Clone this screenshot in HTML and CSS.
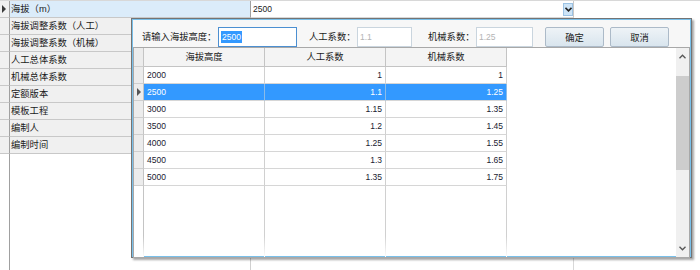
FILE: index.html
```html
<!DOCTYPE html>
<html lang="zh-CN">
<head>
    <meta charset="UTF-8">
    <title>海拔系数</title>
    <link rel="stylesheet" href="styles.css">
</head>
<body>

<div class="sheet">
    <div class="row current">
        <div class="rh"><span class="mark"></span></div>
        <div class="name">海拔（m）</div>
        <div class="val">2500
            <span class="drop">
                <svg width="7" height="5" viewBox="0 0 7 5"><polyline points="0.5,0.8 3.5,3.8 6.5,0.8" fill="none" stroke="#222" stroke-width="1.6"/></svg>
            </span>
        </div>
        <div class="rest"></div>
    </div>
    <div class="row"><div class="rh"></div><div class="name">海拔调整系数（人工）</div><div class="val"></div><div class="rest"></div></div>
    <div class="row"><div class="rh"></div><div class="name">海拔调整系数（机械）</div><div class="val"></div><div class="rest"></div></div>
    <div class="row"><div class="rh"></div><div class="name">人工总体系数</div><div class="val"></div><div class="rest"></div></div>
    <div class="row"><div class="rh"></div><div class="name">机械总体系数</div><div class="val"></div><div class="rest"></div></div>
    <div class="row"><div class="rh"></div><div class="name">定额版本</div><div class="val"></div><div class="rest"></div></div>
    <div class="row"><div class="rh"></div><div class="name">模板工程</div><div class="val"></div><div class="rest"></div></div>
    <div class="row"><div class="rh"></div><div class="name">编制人</div><div class="val"></div><div class="rest"></div></div>
    <div class="row"><div class="rh"></div><div class="name">编制时间</div><div class="val"></div><div class="rest"></div></div>
    <div class="row filler"><div class="rh"></div><div class="name"></div><div class="val"></div><div class="rest"></div></div>
</div>

<!-- dropdown editor for 海拔 -->
<div class="popup">
    <div class="toolbar">
        <label class="lbl">请输入海拔高度：</label>
        <div class="box focus box-alt"><span class="sel">2500</span></div>
        <label class="lbl lbl-2">人工系数：</label>
        <div class="box off box-rg">1.1</div>
        <label class="lbl lbl-3">机械系数：</label>
        <div class="box off box-jx">1.25</div>
        <button class="btn btn-ok">确定</button>
        <button class="btn">取消</button>
    </div>

    <div class="grid">
        <div class="cols">
            <div class="grow head">
                <div class="gh"></div>
                <div class="gc center">海拔高度</div>
                <div class="gc center">人工系数</div>
                <div class="gc center">机械系数</div>
            </div>
            <div class="grow"><div class="gh"></div><div class="gc">2000</div><div class="gc num">1</div><div class="gc num">1</div></div>
            <div class="grow picked"><div class="gh"><span class="mark"></span></div><div class="gc">2500</div><div class="gc num">1.1</div><div class="gc num">1.25</div></div>
            <div class="grow"><div class="gh"></div><div class="gc">3000</div><div class="gc num">1.15</div><div class="gc num">1.35</div></div>
            <div class="grow"><div class="gh"></div><div class="gc">3500</div><div class="gc num">1.2</div><div class="gc num">1.45</div></div>
            <div class="grow"><div class="gh"></div><div class="gc">4000</div><div class="gc num">1.25</div><div class="gc num">1.55</div></div>
            <div class="grow"><div class="gh"></div><div class="gc">4500</div><div class="gc num">1.3</div><div class="gc num">1.65</div></div>
            <div class="grow"><div class="gh"></div><div class="gc">5000</div><div class="gc num">1.35</div><div class="gc num">1.75</div></div>
            <div class="grow empty"><div class="gh"></div><div class="gc"></div><div class="gc"></div><div class="gc"></div></div>
        </div>
        <div class="vscroll">
            <span class="arr">
                <svg width="7" height="5" viewBox="0 0 7 5"><polyline points="0.5,4.2 3.5,1.2 6.5,4.2" fill="none" stroke="#555" stroke-width="1.3"/></svg>
            </span>
            <div class="track"><div class="thumb"></div></div>
            <span class="arr">
                <svg width="7" height="5" viewBox="0 0 7 5"><polyline points="0.5,0.8 3.5,3.8 6.5,0.8" fill="none" stroke="#555" stroke-width="1.3"/></svg>
            </span>
        </div>
    </div>
</div>

</body>
</html>
```

FILE: styles.css
```css
* {
    box-sizing: border-box;
}
body {
    margin: 0;
    background: #fff;
    font-family: "Liberation Sans", "Noto Sans CJK SC", sans-serif;
    font-size: 9.3px;
    color: #1b1b1b;
}

/* property sheet behind the dropdown */
.sheet {
    height: 270px;
    display: flex;
    flex-direction: column;
    border-top: 1px solid #d8d8d8;
}
.row {
    display: flex;
    height: 17px;
    line-height: 16px;
}
.row .rh {
    width: 10px;
    background: #f0f0f0;
    border-right: 1px solid #a0a0a0;
    border-bottom: 1px solid #c8c8c8;
    position: relative;
}
.row .name {
    width: 241px;
    padding-left: 1px;
    background: #f0f0f0;
    border-right: 1px solid #a0a0a0;
    border-bottom: 1px solid #c8c8c8;
    white-space: nowrap;
}
.row .val {
    width: 323px;
    border-right: 1px solid #c8c8c8;
    border-bottom: 1px solid #d8d8d8;
    padding-left: 2px;
    font-size: 8.5px;
    position: relative;
}
.row .rest {
    flex: 1;
}
.row.current .name {
    background: #dbecfa;
}
.row.filler {
    flex: 1;
}
.row.filler .rh,
.row.filler .name,
.row.filler .val {
    background: #fff;
    border-bottom: none;
}
.row.filler .name {
    border-right-color: #d0d0d0;
}
.row.filler .val {
    border-right-color: #d8d8d8;
}

.mark {
    position: absolute;
    left: 2px;
    top: 4px;
    border-left: 4px solid #3a3a3a;
    border-top: 4px solid transparent;
    border-bottom: 4px solid transparent;
}
.drop {
    position: absolute;
    right: 0;
    top: 2px;
    width: 10px;
    height: 13px;
    background: #cde4f7;
    border: 1px solid #9cc3e5;
    display: flex;
    align-items: center;
    justify-content: center;
}

/* dropdown popup */
.popup {
    position: absolute;
    left: 131px;
    top: 18px;
    width: 561px;
    height: 240px;
    background: #fff;
    border: 1px solid #747474;
    box-shadow: inset 0 0 0 1px #79c0ea, 2px 2px 2px rgba(0, 0, 0, 0.35);
    padding: 1px 1px 2px 1px;
    display: flex;
    flex-direction: column;
}
.toolbar {
    height: 30px;
    background: #f7f7f7;
    display: flex;
    align-items: flex-start;
    padding: 7px 0 0 9px;
}
.lbl {
    line-height: 20px;
    white-space: nowrap;
    width: 76px;
}
.lbl-2 {
    margin-left: 12px;
    width: 48px;
}
.lbl-3 {
    margin-left: 16px;
    width: 48px;
}
.box {
    height: 20px;
    line-height: 18px;
    background: #fff;
    border: 1px solid #cad5de;
    font-size: 8.5px;
    padding-left: 2px;
    color: #b4b4b4;
}
.box.focus {
    border-color: #4c8fd1;
    color: #fff;
}
.box-alt {
    width: 79px;
}
.box-rg {
    width: 55px;
}
.box-jx {
    width: 57px;
}
.sel {
    background: #3399ff;
    padding: 1px 1px;
}
.btn {
    width: 59px;
    height: 20px;
    margin-left: 6px;
    font-family: inherit;
    font-size: 9.3px;
    color: #1b1b1b;
    border: 1px solid #acbac8;
    border-radius: 2px;
    background: linear-gradient(#eef3f7, #d9e5ee);
    padding: 0;
}
.btn-ok {
    margin-left: 12px;
}

.grid {
    flex: 1;
    display: flex;
    border: 1px solid #a8a8a8;
}
.cols {
    flex: 1;
    display: flex;
    flex-direction: column;
}
.grow {
    display: flex;
    height: 17px;
    line-height: 16px;
    font-size: 8.5px;
    color: #1a1a30;
}
.grow.head {
    height: 19px;
    line-height: 18px;
    font-size: 9.3px;
    color: #1b1b1b;
}
.grow .gh {
    width: 10px;
    background: #ececec;
    border-right: 1px solid #c4c4c4;
    border-bottom: 1px solid #cfcfcf;
    position: relative;
}
.grow .gc {
    width: 121px;
    padding: 0 3px;
    border-right: 1px solid #d0d0d0;
    border-bottom: 1px solid #d6d6d6;
    white-space: nowrap;
}
.grow.head .gc {
    background: #f4f4f4;
    border-right-color: #c4c4c4;
    border-bottom-color: #c4c4c4;
}
.grow .center {
    text-align: center;
}
.grow .num {
    text-align: right;
}
.grow.picked .gc {
    background: #3399ff;
    color: #fff;
    border-right-color: #8bbbe8;
}
.grow.picked .gh .mark {
    left: 3px;
    top: 4px;
    border-left-color: #555;
}
.grow.empty {
    flex: 1;
}
.grow.empty .gh {
    background: #fff;
    border-bottom: none;
    border-right: 1px solid;
    border-image: linear-gradient(#c4c4c4 70%, #fff) 1;
}
.grow.empty .gc {
    border-bottom: none;
    border-right: 1px solid;
    border-image: linear-gradient(#d0d0d0 70%, #fff) 1;
}

.vscroll {
    width: 13px;
    background: #f0f0f0;
    display: flex;
    flex-direction: column;
}
.arr {
    height: 17px;
    display: flex;
    align-items: center;
    justify-content: center;
}
.track {
    flex: 1;
    padding-top: 11px;
    padding-bottom: 70px;
}
.thumb {
    height: 94px;
    background: #cdcdcd;
}
```
